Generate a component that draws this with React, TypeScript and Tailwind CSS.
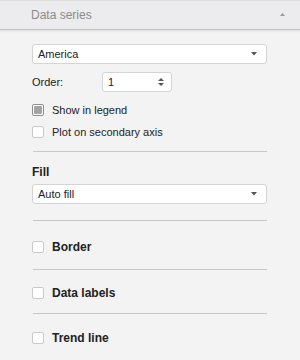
import React from "react";

const font = { fontFamily: '"Liberation Sans", Arial, sans-serif' };

function Caret() {
  return (
    <svg width="6" height="4" viewBox="0 0 6 4" className="block">
      <path d="M0 0 H6 L3 3.5 Z" fill="#555" />
    </svg>
  );
}

function Select({ value }: { value: string }) {
  return (
    <div className="flex h-[20px] items-center justify-between rounded-[3px] border border-[#d4d4d4] bg-white pl-[5px] pr-[9px] text-[11px] text-[#222]">
      <span>{value}</span>
      <Caret />
    </div>
  );
}

function Box({ checked = false }: { checked?: boolean }) {
  return checked ? (
    <div className="flex h-[12px] w-[12px] items-center justify-center rounded-[2px] border border-[#8c8c8c] bg-white">
      <div className="h-[8px] w-[8px] rounded-[1px] bg-[#a3a3a3]" />
    </div>
  ) : (
    <div className="h-[12px] w-[12px] rounded-[2px] border border-[#c9c9c9] bg-white" />
  );
}

function Divider() {
  return <div className="ml-[1px] h-px bg-[#c8c8c8]" />;
}

export default function App() {
  return (
    <div className="h-[360px] w-[300px] overflow-hidden bg-[#f3f3f3]" style={font}>
      <div className="flex h-[30px] items-center justify-between border-t border-b border-t-[#dedede] border-b-[#c4c4c4] bg-[#ececee] pl-[31px] pr-[15px]">
        <span className="text-[12px] text-[#8a8a8a]">Data series</span>
        <svg width="5" height="3" viewBox="0 0 5 3" className="mb-[2px] block">
          <path d="M0 3 H5 L2.5 0 Z" fill="#9a9a9a" />
        </svg>
      </div>
      <div className="h-[3px] bg-gradient-to-b from-[#e2e2e2] to-[#f3f3f3]" />
      <div className="flex flex-col pl-[32px] pr-[33px]">
        <div className="mt-[11px]">
          <Select value="America" />
        </div>
        <div className="mt-[8px] flex h-[20px] items-center">
          <span className="w-[70px] text-[11px] text-[#222]">Order:</span>
          <div className="flex h-[20px] w-[70px] items-center justify-between rounded-[3px] border border-[#d4d4d4] bg-white pl-[5px] pr-[7px] text-[11px] text-[#222]">
            <span>1</span>
            <div className="flex flex-col gap-[2px]">
              <svg width="6" height="3" viewBox="0 0 6 3" className="block">
                <path d="M0 3 H6 L3 0 Z" fill="#555" />
              </svg>
              <svg width="6" height="3" viewBox="0 0 6 3" className="block">
                <path d="M0 0 H6 L3 3 Z" fill="#555" />
              </svg>
            </div>
          </div>
        </div>
        <div className="mt-[12px] flex h-[12px] items-center gap-[8px] text-[11px] text-[#222]">
          <Box checked />
          <span>Show in legend</span>
        </div>
        <div className="mt-[10px] flex h-[12px] items-center gap-[8px] text-[11px] text-[#222]">
          <Box />
          <span>Plot on secondary axis</span>
        </div>
        <div className="mt-[13px]">
          <Divider />
        </div>
        <div className="mt-[13px] text-[12px] font-bold leading-[14px] text-[#222]">Fill</div>
        <div className="mt-[5px]">
          <Select value="Auto fill" />
        </div>
        <div className="mt-[16px]">
          <Divider />
        </div>
        <div className="mt-[20px] flex h-[12px] items-center gap-[8px] text-[12px] font-bold text-[#222]">
          <Box />
          <span>Border</span>
        </div>
        <div className="mt-[16px]">
          <Divider />
        </div>
        <div className="mt-[17px] flex h-[12px] items-center gap-[8px] text-[12px] font-bold text-[#222]">
          <Box />
          <span>Data labels</span>
        </div>
        <div className="mt-[14px]">
          <Divider />
        </div>
        <div className="mt-[18px] flex h-[12px] items-center gap-[8px] text-[12px] font-bold text-[#222]">
          <Box />
          <span>Trend line</span>
        </div>
      </div>
    </div>
  );
}
